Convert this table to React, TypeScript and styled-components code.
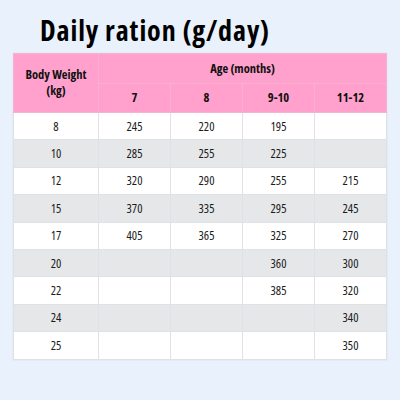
import styled, { createGlobalStyle } from 'styled-components';

const GlobalStyle = createGlobalStyle`
  html, body {
    margin: 0;
    background: #e8f1fc;
  }
  body {
    font-family: 'Open Sans', sans-serif;
  }
`;

const ages = ['7', '8', '9-10', '11-12'];

const rows: [string, string, string, string, string][] = [
  ['8', '245', '220', '195', ''],
  ['10', '285', '255', '225', ''],
  ['12', '320', '290', '255', '215'],
  ['15', '370', '335', '295', '245'],
  ['17', '405', '365', '325', '270'],
  ['20', '', '', '360', '300'],
  ['22', '', '', '385', '320'],
  ['24', '', '', '', '340'],
  ['25', '', '', '', '350'],
];

export default () => {
  return (
    <Page>
      <GlobalStyle />
      <Title>Daily ration (g/day)</Title>
      <Table>
        <colgroup>
          <Col $w={85} />
          <Col $w={72} />
          <Col $w={72} />
          <Col $w={72} />
          <Col />
        </colgroup>
        <thead>
          <HeadRow $h={30}>
            <Head rowSpan={2}>
              Body Weight
              <br />
              (kg)
            </Head>
            <Head colSpan={4}>Age (months)</Head>
          </HeadRow>
          <HeadRow $h={29}>
            {ages.map((a) => (
              <Head key={a}>{a}</Head>
            ))}
          </HeadRow>
        </thead>
        <tbody>
          {rows.map((r, i) => (
            <Row key={r[0]} $shaded={i % 2 === 1}>
              {r.map((v, j) => (
                <Cell key={j}>{v}</Cell>
              ))}
            </Row>
          ))}
        </tbody>
      </Table>
    </Page>
  );
};

const Page = styled.div`
  width: 400px;
  height: 400px;
  padding: 12px 13px 0;
  box-sizing: border-box;
`;

const Title = styled.h1`
  margin: 0 0 5px 27px;
  font-family: 'Open Sans', sans-serif;
  font-stretch: 75%;
  font-weight: 700;
  font-size: 28px;
  line-height: 36px;
  letter-spacing: 0.9px;
  color: #000;
`;

const Table = styled.table`
  width: 374px;
  border-collapse: collapse;
  table-layout: fixed;
  box-shadow: 0 0 1px rgba(0, 0, 0, 0.15);
`;

const Col = styled.col<{ $w?: number }>`
  width: ${(p) => (p.$w ? `${p.$w}px` : 'auto')};
`;

const HeadRow = styled.tr<{ $h: number }>`
  height: ${(p) => p.$h}px;
`;

const Head = styled.th`
  background: #ffa1cc;
  border: 1px solid #f4b3d2;
  font-family: 'Open Sans', sans-serif;
  font-stretch: 75%;
  font-weight: 700;
  font-size: 12.5px;
  line-height: 16px;
  color: #111;
  padding: 0;
`;

const Row = styled.tr<{ $shaded: boolean }>`
  height: 27.4px;
  background: ${(p) => (p.$shaded ? '#e5e7e9' : '#ffffff')};
`;

const Cell = styled.td`
  border: 1px solid #dfe1e4;
  text-align: center;
  font-family: 'Open Sans', sans-serif;
  font-stretch: 87.5%;
  font-size: 12.5px;
  color: #1c1c1c;
  padding: 0;
`;
